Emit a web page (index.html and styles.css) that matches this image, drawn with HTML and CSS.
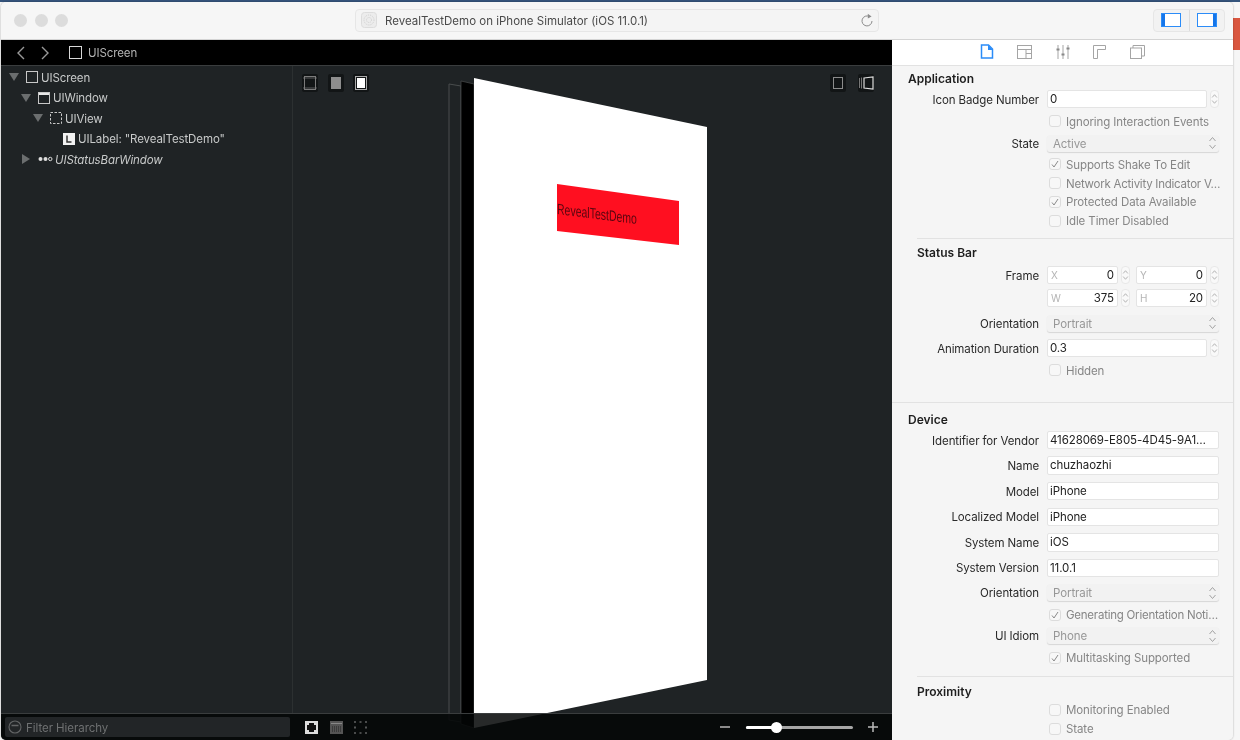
FILE: index.html
```html
<!DOCTYPE html>
<html lang="en">
<head>
<meta charset="utf-8">
<title>RevealTestDemo</title>
<link rel="stylesheet" href="styles.css">
</head>
<body>
<svg class="sprite" width="0" height="0">
  <symbol id="updown" viewBox="0 0 9 16"><path d="M1.5 6 4.5 2.5 7.5 6M1.5 10 4.5 13.5 7.5 10" fill="none" stroke="#a2a2a2" stroke-width="1"/></symbol>
  <symbol id="tick" viewBox="0 0 12 12"><path d="M3 6.5 5 9 9 3" fill="none" stroke="#8a8a8a" stroke-width="1"/></symbol>
</svg>
<div class="window">
  <header class="titlebar">
    <div class="lights"><i></i><i></i><i></i></div>
    <div class="address">
      <svg class="app-icon" width="16" height="16" viewBox="0 0 16 16"><rect x=".5" y=".5" width="15" height="15" rx="3" fill="#ececec" stroke="#dcdcdc"/><circle cx="8" cy="8" r="5" fill="none" stroke="#d0d0d0" stroke-dasharray="1 1"/><circle cx="8" cy="8" r="2.5" fill="none" stroke="#d0d0d0" stroke-dasharray="1 1"/></svg>
      <span class="address-text">RevealTestDemo on iPhone Simulator (iOS 11.0.1)</span>
      <svg class="reload" width="14" height="15" viewBox="0 0 14 15"><path d="M9.5 3.6A5 5 0 1 0 12 8" fill="none" stroke="#8c8c8c" stroke-width="1"/><path d="M7.8 .8 11.6 3.4 7.8 5.6Z" fill="#8c8c8c"/></svg>
    </div>
    <div class="segments">
      <div class="segment"><svg width="20" height="14" viewBox="0 0 20 14"><rect x=".5" y=".5" width="19" height="13" fill="#fff" stroke="#2b8cf8"/><rect x="1" y="1" width="3" height="12" fill="#1576ea"/></svg></div>
      <div class="segment"><svg width="20" height="14" viewBox="0 0 20 14"><rect x=".5" y=".5" width="19" height="13" fill="#fff" stroke="#2b8cf8"/><rect x="16" y="1" width="3" height="12" fill="#1576ea"/></svg></div>
    </div>
  </header>
  <div class="body">
    <main class="dark">
      <nav class="navbar">
        <svg width="10" height="14" viewBox="0 0 10 14"><path d="M8 1 2 7l6 6" fill="none" stroke="#9a9a9a" stroke-width="1.4"/></svg>
        <svg class="nav-next" width="10" height="14" viewBox="0 0 10 14"><path d="M2 1l6 6-6 6" fill="none" stroke="#9a9a9a" stroke-width="1.4"/></svg>
        <svg class="nav-square" width="13" height="13" viewBox="0 0 13 13"><rect x=".5" y=".5" width="12" height="12" fill="none" stroke="#d8d8d8"/></svg>
        <span class="nav-title">UIScreen</span>
      </nav>
      <div class="split">
        <aside class="tree">
          <div class="node depth0"><svg class="tri" width="10" height="10" viewBox="0 0 10 10"><path d="M0 1h10L5 9Z"/></svg><svg class="ico" width="12" height="12" viewBox="0 0 12 12"><rect x=".5" y=".5" width="11" height="11" fill="none" stroke="#c8c8c8"/></svg><span>UIScreen</span></div>
          <div class="node depth1"><svg class="tri" width="10" height="10" viewBox="0 0 10 10"><path d="M0 1h10L5 9Z"/></svg><svg class="ico" width="12" height="12" viewBox="0 0 12 12"><rect x=".5" y=".5" width="11" height="11" fill="none" stroke="#c8c8c8"/><rect x="1" y="1" width="10" height="2" fill="#e8e8e8"/></svg><span>UIWindow</span></div>
          <div class="node depth2"><svg class="tri" width="10" height="10" viewBox="0 0 10 10"><path d="M0 1h10L5 9Z"/></svg><svg class="ico" width="12" height="12" viewBox="0 0 12 12"><rect x=".5" y=".5" width="11" height="11" fill="none" stroke="#c8c8c8" stroke-dasharray="2.5 1.5"/></svg><span>UIView</span></div>
          <div class="node depth3"><i class="tri-gap"></i><svg class="ico" width="12" height="12" viewBox="0 0 12 12"><rect width="12" height="12" fill="#f2f2f2"/><path d="M4 2.5V9h4.5" fill="none" stroke="#333" stroke-width="1.5"/></svg><span>UILabel: "RevealTestDemo"</span></div>
          <div class="node depth1 status"><svg class="tri" width="10" height="10" viewBox="0 0 10 10"><path d="M1 0l8 5-8 5Z"/></svg><svg class="ico dots" width="15" height="6" viewBox="0 0 15 6"><circle cx="2.5" cy="3" r="2" fill="#ddd"/><circle cx="7.5" cy="3" r="2" fill="#ddd"/><circle cx="12.3" cy="3" r="1.7" fill="none" stroke="#ddd"/></svg><span>UIStatusBarWindow</span></div>
        </aside>
        <section class="canvas">
          <svg class="layers" viewBox="293 66 599 674" width="599" height="674">
            <path d="M449 84 461 86V722L449 720Z" fill="none" stroke="#4a4d4e"/>
            <path d="M461 81 474 84V728L461 724Z" fill="#000" stroke="#4a4d4e" stroke-width=".7"/>
            <path d="M474 78 707 127V680L474 728Z" fill="#fff"/>
            <path d="M557 184 679 201V245L557 231Z" fill="#ff0f20"/>
            <text class="layer-label" transform="matrix(.7 .088 0 1 557 214)">RevealTestDemo</text>
          </svg>
          <div class="view-tools">
            <div class="tool-group">
              <b class="tool"><svg width="16" height="18" viewBox="0 0 16 18"><rect x="2.500" y="2.500" width="11" height="13" fill="none" stroke="#7b7b7b"/><path d="M1 4h14M1 14h14" stroke="#7b7b7b" stroke-width=".7"/></svg></b>
              <b class="tool"><svg width="16" height="18" viewBox="0 0 16 18"><rect x="3" y="3" width="10" height="12" fill="#8d8d8d"/></svg></b>
              <b class="tool"><svg width="16" height="18" viewBox="0 0 16 18"><rect x="2.500" y="2.500" width="11" height="13" fill="none" stroke="#aaa"/><rect x="4" y="4" width="8" height="10" fill="#fff"/></svg></b>
            </div>
            <div class="tool-group end">
              <b class="tool"><svg width="16" height="18" viewBox="0 0 16 18"><rect x="3.500" y="3.500" width="9" height="11" fill="none" stroke="#8b8b8b"/></svg></b>
              <b class="tool"><svg width="16" height="18" viewBox="0 0 16 18"><path d="M1.500 4v10M3.500 3.500v11" stroke="#777"/><path d="M6 4 15 3V15L6 14Z" fill="none" stroke="#ddd" stroke-width="1.200"/></svg></b>
            </div>
          </div>
        </section>
      </div>
      <footer class="bottombar">
        <div class="filter">
          <svg width="14" height="14" viewBox="0 0 14 14"><circle cx="7" cy="7" r="6" fill="none" stroke="#636566" stroke-width="1.1"/><path d="M3.5 5.500h7" stroke="#636566" stroke-width="1.5"/></svg>
          <span>Filter Hierarchy</span>
        </div>
        <div class="bar-tools">
          <svg width="13" height="13" viewBox="0 0 13 13"><rect width="13" height="13" fill="#ddd"/><path d="M4 2h5v2h2v5H9v2H4V9H2V4h2Z" fill="#111"/></svg>
          <svg width="13" height="13" viewBox="0 0 13 13"><rect width="13" height="13" fill="#555"/><path d="M1 2.500h11" stroke="#888"/><path d="M2 6h9M2 8h9M2 10h9" stroke="#222" stroke-dasharray="1 1"/></svg>
          <svg width="13" height="13" viewBox="0 0 13 13"><path d="M0 1h2M5.500 1h2M11 1h2M0 12h2M5.500 12h2M11 12h2M1 5.500v2M12 5.500v2" stroke="#8b8b8b" stroke-width="1.200"/></svg>
        </div>
        <div class="zoom">
          <i class="minus"></i>
          <div class="track"><i class="fill"></i><i class="thumb"></i></div>
          <svg width="12" height="12" viewBox="0 0 12 12"><path d="M6 1v10M1 6h10" stroke="#bbb" stroke-width="1.5"/></svg>
        </div>
      </footer>
    </main>
    <aside class="inspector">
      <div class="tabs">
        <svg width="14" height="15" viewBox="0 0 14 15"><path d="M1.500 1H8.500L12.500 5V14H1.500Z" fill="#fff" stroke="#2b8cf8" stroke-width="1.500"/><path d="M8 1 13 6H8Z" fill="#2b8cf8"/></svg>
        <svg width="15" height="14" viewBox="0 0 15 14"><rect x=".5" y=".5" width="14" height="13" fill="none" stroke="#a5a5a5"/><path d="M1 4.500h13M9 5v8M9 8.500h5" stroke="#a5a5a5"/></svg>
        <svg width="14" height="14" viewBox="0 0 14 14"><path d="M2 0v14M7 0v14M12 0v14" stroke="#a5a5a5"/><path d="M.5 4.500h3M5.500 9.500h3M10.500 3.500h3" stroke="#888" stroke-width="2"/></svg>
        <svg width="13" height="14" viewBox="0 0 13 14"><path d="M.5 13.500V.5H12.500V4.500H4.500V13.500Z" fill="none" stroke="#a5a5a5"/></svg>
        <svg width="15" height="14" viewBox="0 0 15 14"><rect x=".5" y="3" width="11" height="10.500" fill="none" stroke="#a5a5a5"/><path d="M3 3V.5H14.500V11H11.500" fill="none" stroke="#a5a5a5"/></svg>
      </div>
      <div class="form">
        <h3 class="sec d-first">Application</h3>
        <div class="row d20"><label>Icon Badge Number</label><div class="input short">0</div><svg class="stepper" width="9" height="18"><use href="#updown"/></svg></div>
        <div class="row d22"><span class="check"></span><span class="dim">Ignoring Interaction Events</span></div>
        <div class="row d22"><label>State</label><div class="select"><span>Active</span><svg width="9" height="16"><use href="#updown"/></svg></div></div>
        <div class="row d21"><span class="check"><svg width="12" height="12"><use href="#tick"/></svg></span><span class="dim">Supports Shake To Edit</span></div>
        <div class="row d19"><span class="check"></span><span class="dim trunc">Network Activity Indicator V…</span></div>
        <div class="row d18h"><span class="check"><svg width="12" height="12"><use href="#tick"/></svg></span><span class="dim">Protected Data Available</span></div>
        <div class="row d19"><span class="check"></span><span class="dim">Idle Timer Disabled</span></div>
        <hr class="rule inset d-rule">
        <h3 class="sec inset-text">Status Bar</h3>
        <div class="row d22"><label>Frame</label>
          <div class="input coord"><em>X</em>0</div><svg class="stepper" width="9" height="18"><use href="#updown"/></svg>
          <div class="input coord next"><em>Y</em>0</div><svg class="stepper" width="9" height="18"><use href="#updown"/></svg></div>
        <div class="row d23"><label></label>
          <div class="input coord"><em>W</em>375</div><svg class="stepper" width="9" height="18"><use href="#updown"/></svg>
          <div class="input coord next"><em>H</em>20</div><svg class="stepper" width="9" height="18"><use href="#updown"/></svg></div>
        <div class="row d25"><label>Orientation</label><div class="select"><span>Portrait</span><svg width="9" height="16"><use href="#updown"/></svg></div></div>
        <div class="row d25"><label>Animation Duration</label><div class="input short">0.3</div><svg class="stepper" width="9" height="18"><use href="#updown"/></svg></div>
        <div class="row d22"><span class="check"></span><span class="dim">Hidden</span></div>
        <hr class="rule d-rule-wide">
        <h3 class="sec">Device</h3>
        <div class="row d20"><label>Identifier for Vendor</label><div class="input">41628069-E805-4D45-9A1…</div></div>
        <div class="row field"><label>Name</label><div class="input">chuzhaozhi</div></div>
        <div class="row field"><label>Model</label><div class="input">iPhone</div></div>
        <div class="row field"><label>Localized Model</label><div class="input">iPhone</div></div>
        <div class="row field"><label>System Name</label><div class="input">iOS</div></div>
        <div class="row field"><label>System Version</label><div class="input">11.0.1</div></div>
        <div class="row d25"><label>Orientation</label><div class="select"><span>Portrait</span><svg width="9" height="16"><use href="#updown"/></svg></div></div>
        <div class="row d22"><span class="check"><svg width="12" height="12"><use href="#tick"/></svg></span><span class="dim trunc">Generating Orientation Noti…</span></div>
        <div class="row d21"><label>UI Idiom</label><div class="select"><span>Phone</span><svg width="9" height="16"><use href="#updown"/></svg></div></div>
        <div class="row d22"><span class="check"><svg width="12" height="12"><use href="#tick"/></svg></span><span class="dim">Multitasking Supported</span></div>
        <hr class="rule inset d-rule-low">
        <h3 class="sec inset-text">Proximity</h3>
        <div class="row d18"><span class="check"></span><span class="dim">Monitoring Enabled</span></div>
        <div class="row d19"><span class="check"></span><span class="dim">State</span></div>
      </div>
    </aside>
  </div>
</div>
</body>
</html>
```

FILE: styles.css
```css
* { box-sizing: border-box; }
html, body { margin: 0; height: 100%; }
body {
  width: 1240px; height: 740px; overflow: hidden;
  padding: 2px 7px 0 1px;
  font: 11.5px/18px Inter, "Liberation Sans", sans-serif;
  letter-spacing: -.1px;
  background:
    linear-gradient(#35547c, #35547c) 0 0 / 100% 2px no-repeat,
    linear-gradient(#d9563f, #d9563f) 100% 18px / 7px 32px no-repeat,
    #f6f6f6;
}
.sprite { position: absolute; }
.window {
  height: 738px; display: flex; flex-direction: column;
  border-radius: 5px; overflow: hidden;
  box-shadow: 0 0 2px rgba(0,0,0,.35);
  background: #f5f5f5;
  filter: blur(.35px);
}
.titlebar {
  flex: 0 0 38px; display: flex; align-items: center;
  background: #f6f6f6; border-bottom: 1px solid #d4d4d4;
  padding: 0 8px 1px 13px;
}
.lights { display: flex; gap: 7.500px; width: 341px; }
.lights i { width: 13px; height: 13px; border-radius: 50%; background: #dcdcdc; }
.address {
  width: 524px; height: 23px; display: flex; align-items: center;
  background: #f4f4f4; border: 1px solid #e6e6e6; border-radius: 4px;
  padding: 0 4px 0 5px; color: #4a4a4a;
}
.address-text { margin-left: 8px; flex: 1; letter-spacing: 0; padding-top: 1px; }
.segments {
  margin-left: auto; width: 72px; height: 23px; display: flex;
  background: #f2f2f2; border: 1px solid #e6e6e6; border-radius: 4px;
}
.segment { flex: 1; display: flex; align-items: center; justify-content: center; }
.segment + .segment { border-left: 1px solid #dcdcdc; }

.body { flex: 1; display: flex; min-height: 0; }
.dark { width: 891px; display: flex; flex-direction: column; position: relative; background: #1f2325; }
.navbar {
  flex: 0 0 26px; display: flex; align-items: center;
  background: #000; border-bottom: 1px solid #3a3d3e; padding-left: 15px; color: #b4b4b4;
}
.nav-next { margin-left: 14px; }
.nav-square { margin-left: 19px; }
.nav-title { margin-left: 6px; padding-top: 1px; }
.split { flex: 1; display: flex; min-height: 0; }
.tree { width: 292px; border-right: 1px solid #2c3031; padding-top: 1px; color: #c8caca; }
.node { height: 20.500px; display: flex; align-items: center; }
.node span { padding-top: 1px; }
.depth0 { padding-left: 8px; }
.depth1 { padding-left: 20px; }
.depth2 { padding-left: 32px; }
.depth3 { padding-left: 45px; }
.tri { fill: #6b6e6f; flex: none; }
.tri-gap { width: 10px; flex: none; }
.ico { margin: 0 3px 0 7px; flex: none; }
.dots { margin: 0 2px 0 7px; }
.status span { font-style: italic; }
.canvas { flex: 1; position: relative; }
.layers { position: absolute; left: 0; top: 0; overflow: visible; }
.layer-label { font: 15px "Liberation Sans", sans-serif; letter-spacing: 0; fill: #5a0610; }
.view-tools { position: relative; display: flex; justify-content: space-between; padding: 8px 18px 0 9px; }
.tool-group { display: flex; gap: 9.500px; }
.tool-group.end { gap: 12px; }
.tool { width: 16px; height: 18px; display: flex; background: #121516; border-radius: 2px; }
.bottombar {
  flex: 0 0 27px; position: relative; display: flex; align-items: center;
  background: rgba(4,6,6,.86); border-top: 1px solid #3a3d3e; padding-left: 4px;
}
.filter {
  width: 285px; height: 20px; display: flex; align-items: center; gap: 4px;
  background: #222527; border-radius: 2px; padding-left: 3px; color: #6e7071; letter-spacing: -.05px;
}
.filter span { padding-top: 1px; }
.bar-tools { display: flex; gap: 11.500px; margin-left: 15px; }
.zoom { margin-left: auto; margin-right: 13px; display: flex; align-items: center; }
.minus { width: 10px; height: 1.500px; background: #8b8b8b; margin-right: 16px; }
.track { width: 107px; height: 3px; border-radius: 2px; background: #a6a6a6; position: relative; margin-right: 14px; }
.fill { position: absolute; left: 0; top: 0; width: 30px; height: 3px; border-radius: 2px; background: #fff; }
.thumb { position: absolute; left: 24.500px; top: -4px; width: 11px; height: 11px; border-radius: 50%; background: #fff; }

.inspector { width: 341px; display: flex; flex-direction: column; background: #f5f5f5; color: #333; }
.tabs {
  flex: 0 0 26px; display: flex; align-items: center; justify-content: center; gap: 23.500px;
  background: #fff; border-bottom: 1px solid #e2e2e2; padding: 0 1px 2px 0;
}
.form { flex: 1; min-height: 0; overflow: hidden; }
.row { height: 18px; display: flex; align-items: center; white-space: nowrap; }
.sec { margin: 0; height: 18px; padding-left: 16px; font: 600 12px/18px Inter, sans-serif; letter-spacing: 0; color: #1e1e1e; }
.inset-text { padding-left: 25px; }
.d-first { margin-top: 4px; }
.d18 { margin-top: 0; }
.d18h { margin-top: .5px; }
.d19 { margin-top: 1px; }
.d20 { margin-top: 2px; }
.d21 { margin-top: 3px; }
.d22 { margin-top: 4px; }
.d23 { margin-top: 5px; }
.d25 { margin-top: 7px; }
.field { margin-top: 7.600px; }
label { width: 147px; text-align: right; margin-right: 8px; padding-top: 1px; color: #2a2a2a; flex: none; }
.check {
  width: 12px; height: 12px; margin-left: 157px; margin-right: 5px; flex: none;
  background: #f7f7f7; border: 1px solid #dcdcdc; border-radius: 3px; display: flex;
  align-items: center; justify-content: center;
}
.check svg { flex: none; }
.dim { color: #868686; padding-top: 1px; }
.trunc { letter-spacing: -.24px; }
.input {
  width: 172px; height: 18.500px; background: #fff; border: 1px solid #e4e4e4; border-radius: 2px;
  padding-left: 2px; color: #222; line-height: 17px; overflow: hidden;
}
.input.short { width: 160px; }
.stepper { margin-left: 3px; flex: none; background: #f9f9f9; border: 1px solid #e8e8e8; border-radius: 4px; }
.input.coord { width: 71px; display: flex; justify-content: space-between; padding: 0 3px; }
.input.coord.next { margin-left: 6px; }
.input em { font-style: normal; font-size: 10px; color: #b5b5b5; }
.select {
  width: 172px; height: 17px; display: flex; align-items: center; justify-content: space-between;
  background: #f2f2f2; border-radius: 3px; box-shadow: 0 1px 1px #d6d6d6;
  padding: 0 2px 0 6px; color: #979797;
}
.select span { padding-top: 1px; }
.rule { border: 0; height: 1px; margin: 0; background: #e2e2e2; }
.rule.inset { margin-left: 25px; }
.d-rule { margin-top: 8.500px; margin-bottom: 5px; }
.d-rule-wide { margin-top: 22.500px; margin-bottom: 8.500px; }
.d-rule-low { margin-top: 9px; margin-bottom: 6px; }
```
